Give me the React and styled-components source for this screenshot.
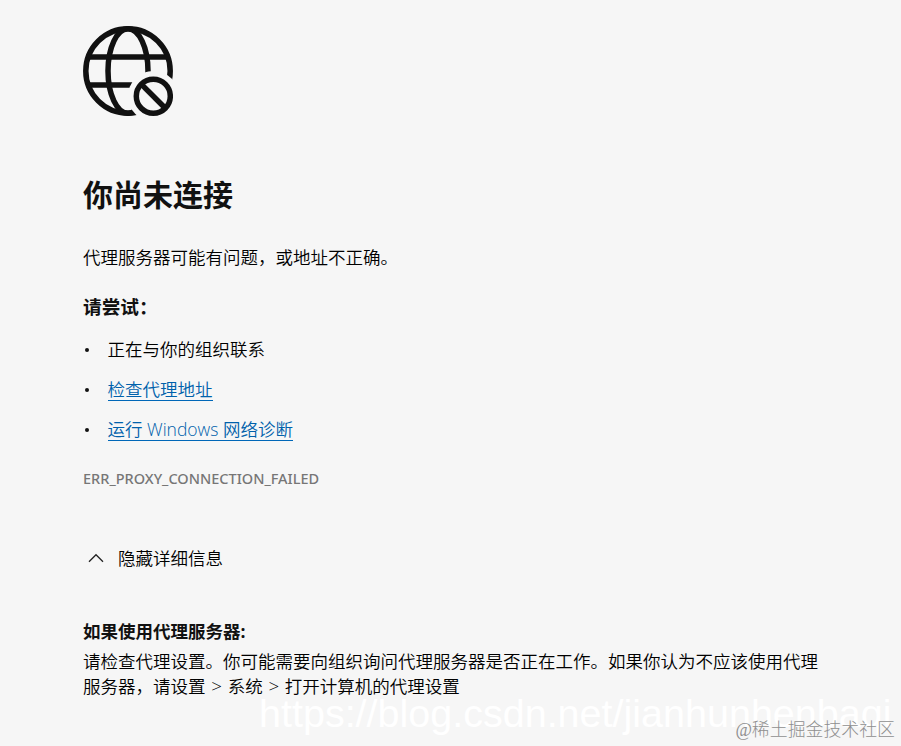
import React, { useState } from 'react';
import styled, { createGlobalStyle } from 'styled-components';

const GlobalStyle = createGlobalStyle`
  body {
    margin: 0;
    background: #f6f6f6;
    color: #000;
    font-family: 'Open Sans', 'Noto Sans CJK SC', sans-serif;
    font-size: 17.5px;
    font-weight: 350;
  }
`;

const Page = styled.main`
  box-sizing: border-box;
  position: relative;
  height: 746px;
  padding: 26px 78px 0 83px;
  overflow: hidden;
`;

const Globe = styled.svg`
  display: block;
  width: 90px;
  height: 90px;
  fill: none;
  stroke: #111;
  stroke-width: 5.5px;
`;

const Title = styled.h1`
  margin: 59px 0 0;
  color: #111;
  font-size: 30px;
  font-weight: 700;
  line-height: 40px;
`;

const Summary = styled.p`
  margin: 29px 0 0;
  line-height: 26px;
`;

const Subtitle = styled.h2`
  margin: 24px 0 0;
  color: #111;
  font-size: 18.7px;
  font-weight: 700;
  line-height: 26px;
`;

const Suggestions = styled.ul`
  display: flex;
  flex-direction: column;
  gap: 14px;
  margin: 16px 0 0;
  padding: 0;
  list-style: none;
`;

const Suggestion = styled.li`
  display: flex;
  align-items: center;
  gap: 18.5px;
  height: 26px;
  line-height: 26px;
  white-space: nowrap;

  &::before {
    content: '';
    width: 4px;
    height: 4px;
    margin: 2px 0 0 2px;
    border-radius: 50%;
    background: #111;
  }
`;

const Link = styled.a`
  height: 23px;
  line-height: 24px;
  border-bottom: 1px solid #0067b8;
  color: #0061ab;
  text-decoration: none;
`;

const ErrorCode = styled.div`
  margin-top: 26px;
  color: #767676;
  font-family: 'Noto Sans', 'Open Sans', sans-serif;
  font-size: 14.5px;
  font-weight: 500;
  line-height: 21px;
  white-space: nowrap;
`;

const Toggle = styled.button`
  display: flex;
  align-items: center;
  gap: 14px;
  margin: 56px 0 0 5px;
  padding: 0;
  border: 0;
  background: none;
  color: inherit;
  font: inherit;
  line-height: 26px;
  cursor: pointer;
`;

const Chevron = styled.svg`
  width: 16px;
  height: 10px;
  fill: none;
  stroke: #222;
  stroke-width: 1.3px;
  transform: ${({ $open }) => ($open ? 'none' : 'rotate(180deg)')};
`;

const Details = styled.section`
  margin-top: 47px;
`;

const DetailsTitle = styled.h3`
  margin: 0;
  color: #111;
  font-size: 17.5px;
  font-weight: 700;
  line-height: 26px;
`;

const DetailsText = styled.p`
  margin: 5px 0 0;
  line-height: 25px;
  white-space: nowrap;
`;

const Separator = styled.span`
  margin: 0 1.2px;
  font-size: 18.7px;
  line-height: 1;
`;

const BlogMark = styled.span`
  position: absolute;
  top: 691px;
  left: 259px;
  color: #fff;
  font-family: 'Liberation Sans', sans-serif;
  font-size: 39.5px;
  font-weight: 400;
  line-height: 44px;
  white-space: nowrap;
  pointer-events: none;
`;

const CommunityMark = styled.span`
  position: absolute;
  right: 6px;
  bottom: 4px;
  color: #8f8f8f;
  font-family: 'Liberation Serif', 'Noto Sans CJK SC', serif;
  font-size: 17.9px;
  font-weight: 300;
  line-height: 24px;
  white-space: nowrap;
  pointer-events: none;
`;

const OfflineGlobe = () => (
  <Globe viewBox="0 0 90 90">
    <mask id="badge-gap" maskUnits="userSpaceOnUse" x="0" y="0" width="90" height="90">
      <rect width="90" height="90" fill="#fff" stroke="none" />
      <circle cx="70.3" cy="70.2" r="25.3" fill="#000" stroke="none" />
    </mask>
    <g mask="url(#badge-gap)">
      <circle cx="45" cy="45" r="42.2" />
      <ellipse cx="45" cy="45" rx="20" ry="42.2" />
      <path d="M6 31H84M6 59H84" />
    </g>
    <circle cx="70.3" cy="70.2" r="17" />
    <path d="M58.5 58.4L82.1 82" />
  </Globe>
);

const App = () => {
  const [open, setOpen] = useState(true);

  return (
    <>
      <GlobalStyle />
      <Page lang="zh-CN">
        <OfflineGlobe />
        <Title>你尚未连接</Title>
        <Summary>代理服务器可能有问题，或地址不正确。</Summary>
        <Subtitle>请尝试：</Subtitle>
        <Suggestions>
          <Suggestion>正在与你的组织联系</Suggestion>
          <Suggestion><Link href="#proxy">检查代理地址</Link></Suggestion>
          <Suggestion><Link href="#diagnostics">运行 Windows 网络诊断</Link></Suggestion>
        </Suggestions>
        <ErrorCode>ERR_PROXY_CONNECTION_FAILED</ErrorCode>
        <Toggle onClick={() => setOpen(!open)}>
          <Chevron viewBox="0 0 16 10" $open={open}>
            <path d="M1 8.7L8 1.7L15 8.7" />
          </Chevron>
          隐藏详细信息
        </Toggle>
        {open && (
          <Details>
            <DetailsTitle>如果使用代理服务器:</DetailsTitle>
            <DetailsText>
              请检查代理设置。你可能需要向组织询问代理服务器是否正在工作。如果你认为不应该使用代理
              <br />
              服务器，请设置 <Separator>&gt;</Separator> 系统 <Separator>&gt;</Separator> 打开计算机的代理设置
            </DetailsText>
          </Details>
        )}
        <BlogMark>https://blog.csdn.net/jianhunhenbaqi</BlogMark>
        <CommunityMark>@稀土掘金技术社区</CommunityMark>
      </Page>
    </>
  );
};

export default App;
